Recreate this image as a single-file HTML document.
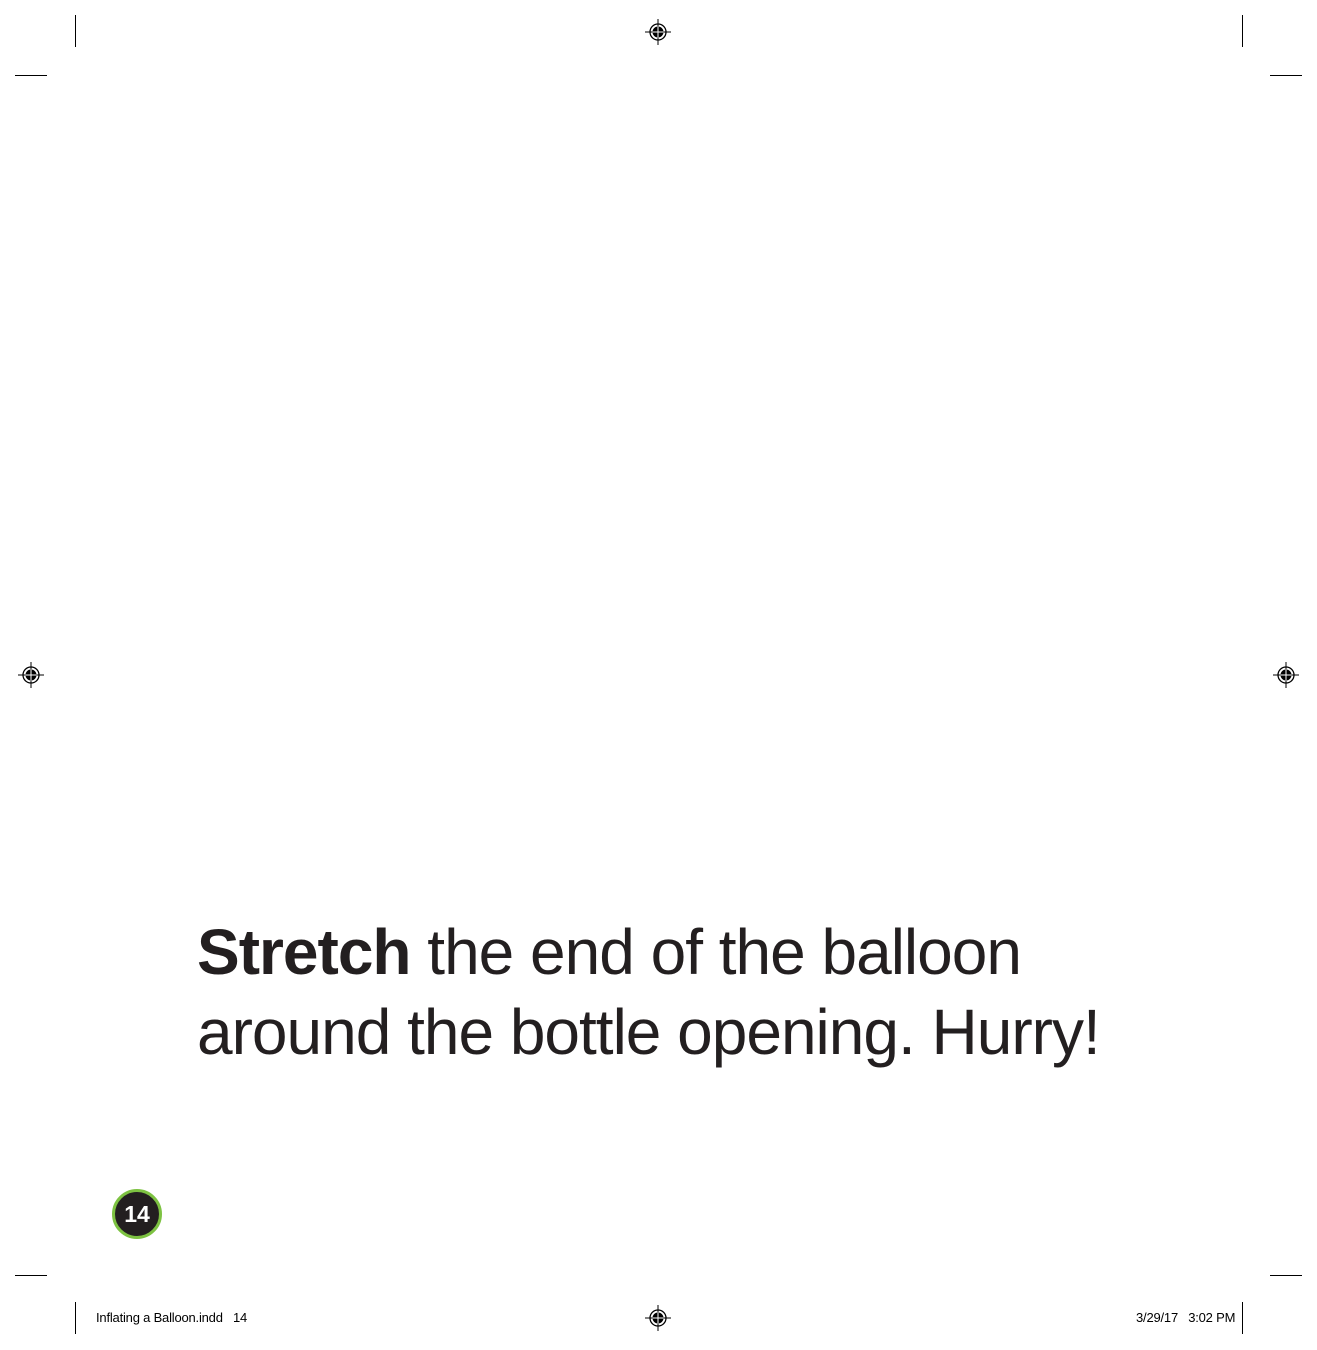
<!DOCTYPE html>
<html><head><style>
body{margin:0;width:1317px;height:1350px;background:#fff;position:relative;overflow:hidden;font-family:"Liberation Sans",sans-serif;color:#231f20}
.l{position:absolute;background:#000}
.t{position:absolute;left:197px;top:912px;font-size:64px;line-height:80px;white-space:nowrap;letter-spacing:-1px}
.f{position:absolute;top:1310px;font-size:13px;letter-spacing:-0.2px;color:#000}
</style></head><body>
<div class="l" style="left:75px;top:15px;width:1px;height:32px"></div>
<div class="l" style="left:1242px;top:15px;width:1px;height:32px"></div>
<div class="l" style="left:15px;top:75px;width:32px;height:1px"></div>
<div class="l" style="left:1270px;top:75px;width:32px;height:1px"></div>
<div class="l" style="left:15px;top:1275px;width:32px;height:1px"></div>
<div class="l" style="left:1270px;top:1275px;width:32px;height:1px"></div>
<div class="l" style="left:75px;top:1302px;width:1px;height:32px"></div>
<div class="l" style="left:1242px;top:1302px;width:1px;height:32px"></div>
<svg width="0" height="0" style="position:absolute"><defs><g id="r"><circle r="8" fill="none" stroke="#000" stroke-width="1.3"/><circle r="5.5" fill="#000"/><path d="M-13 0H13M0 -13V13" stroke="#000" stroke-width="1"/><path d="M-5.5 0H5.5M0 -5.5V5.5" stroke="#fff" stroke-width="1"/></g></defs></svg>
<svg style="position:absolute;left:644px;top:18px" width="28" height="28"><use href="#r" x="14" y="14"/></svg>
<svg style="position:absolute;left:17px;top:661px" width="28" height="28"><use href="#r" x="14" y="14"/></svg>
<svg style="position:absolute;left:1272px;top:661px" width="28" height="28"><use href="#r" x="14" y="14"/></svg>
<svg style="position:absolute;left:644px;top:1304px" width="28" height="28"><use href="#r" x="14" y="14"/></svg>
<div class="t"><b>Stretch</b> the end of the balloon<br>around the bottle opening. Hurry!</div>
<div style="position:absolute;left:112px;top:1189px;width:44px;height:44px;border-radius:50%;background:#231f20;border:3px solid #7dc242;color:#fff;font-weight:bold;font-size:23px;line-height:44px;text-align:center">14</div>
<div class="f" style="left:96px">Inflating a Balloon.indd&nbsp;&nbsp;&nbsp;14</div>
<div class="f" style="left:1136px">3/29/17&nbsp;&nbsp;&nbsp;3:02 PM</div>
</body></html>
